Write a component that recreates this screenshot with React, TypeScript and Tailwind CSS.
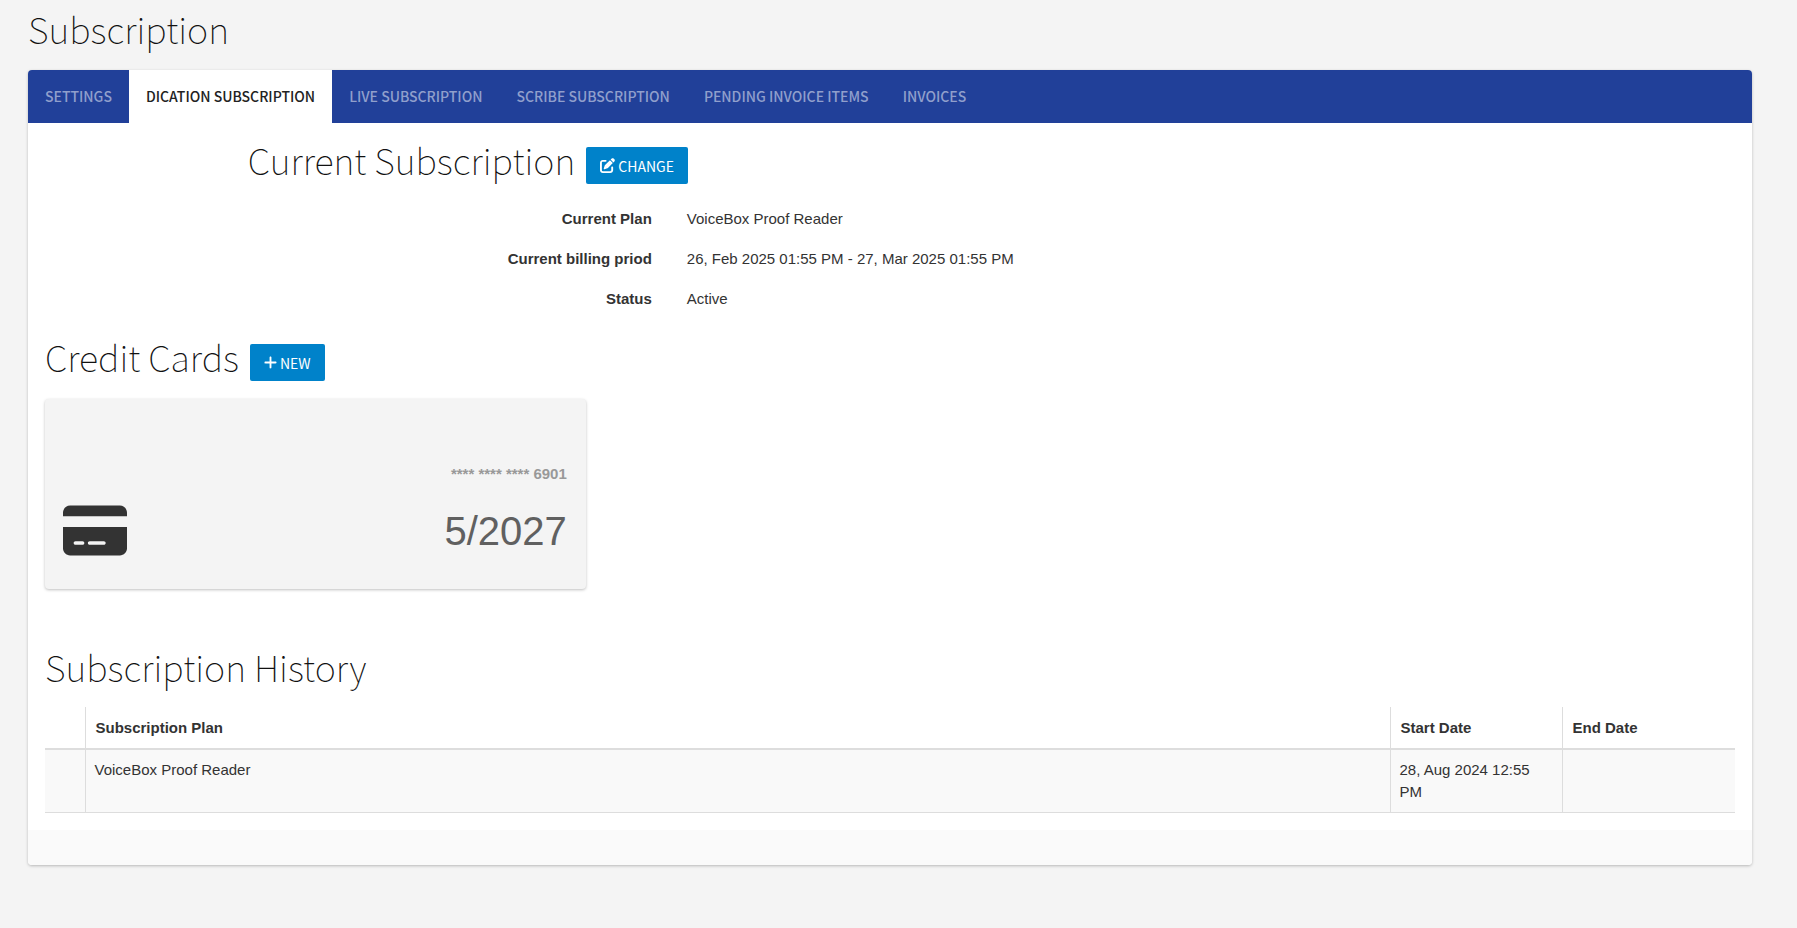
import React, { useState } from 'react';
import { FaCreditCard, FaPenToSquare, FaPlus } from 'react-icons/fa6';

const tabs = [
  'Settings',
  'Dication Subscription',
  'Live Subscription',
  'Scribe Subscription',
  'Pending Invoice Items',
  'Invoices',
];

const planDetails = [
  { label: 'Current Plan', value: 'VoiceBox Proof Reader' },
  { label: 'Current billing priod', value: '26, Feb 2025 01:55 PM - 27, Mar 2025 01:55 PM' },
  { label: 'Status', value: 'Active' },
];

const history = [
  { plan: 'VoiceBox Proof Reader', start: '28, Aug 2024 12:55 PM', end: '' },
];

const headingClass =
  "font-['Noto_Sans_CJK_SC',sans-serif] text-[36px] leading-[40px] font-thin text-[#111]";

interface ActionButtonProps {
  icon: React.ReactNode;
  children: React.ReactNode;
}

const ActionButton = ({ icon, children }: ActionButtonProps) => (
  <button
    type="button"
    className="mt-2 flex h-[37px] items-center gap-[3px] rounded-xs bg-[#0082ca] px-[14px] font-['Noto_Sans_CJK_SC',sans-serif] text-[14px] leading-[20px] font-normal text-white uppercase"
  >
    {icon}
    {children}
  </button>
);

const CreditCard = () => (
  <div className="flex h-[190px] w-[32%] items-end justify-between rounded-sm bg-[#f4f4f4] pr-[19px] pl-[18px] shadow-[0_1px_3px_rgba(0,0,0,0.25)]">
    <FaCreditCard className="mb-[30px] h-[57px] w-[64px]" />
    <div className="pb-8 text-right">
      <p className="text-[15px] leading-[22px] font-bold text-[#999]">**** **** **** 6901</p>
      <p className="mt-5 text-[40px] leading-[52px] text-[#606060]">5/2027</p>
    </div>
  </div>
);

const App = () => {
  const [activeTab, setActiveTab] = useState(tabs[1]);

  return (
    <div className="min-h-screen bg-[#f4f4f4] pr-[45px] pb-16 pl-7 font-['Liberation_Sans',Arial,sans-serif] text-[15px] leading-[22px] text-[#333]">
      <h1 className={`${headingClass} pt-2 pb-[22px]`}>Subscription</h1>

      <div className="overflow-hidden rounded-sm bg-white shadow-[0_1px_3px_rgba(0,0,0,0.25)]">
        {/* Tabs */}
        <nav className="flex bg-[#214099]">
          {tabs.map((tab) => (
            <button
              key={tab}
              type="button"
              onClick={() => setActiveTab(tab)}
              className={`h-[53px] px-[17px] pb-[2px] font-['Noto_Sans_CJK_SC',sans-serif] text-[14px] leading-[20px] font-medium uppercase ${
                tab === activeTab ? 'bg-white text-[#222]' : 'text-[#909fcc]'
              }`}
            >
              {tab}
            </button>
          ))}
        </nav>

        <div className="px-[17px] pb-[17px]">
          {/* Current subscription */}
          <section className="ml-[12%] pt-4">
            <div className="flex items-start gap-[11px]">
              <h2 className={headingClass}>Current Subscription</h2>
              <ActionButton icon={<FaPenToSquare className="size-[15px]" />}>Change</ActionButton>
            </div>
            <dl className="mt-6 space-y-[18px]">
              {planDetails.map((item) => (
                <div key={item.label} className="flex gap-[35px]">
                  <dt className="w-[404px] text-right font-bold">{item.label}</dt>
                  <dd>{item.value}</dd>
                </div>
              ))}
            </dl>
          </section>

          {/* Credit cards */}
          <section className="pt-[26px]">
            <div className="mb-[18px] flex items-start gap-[11px]">
              <h2 className={headingClass}>Credit Cards</h2>
              <ActionButton icon={<FaPlus className="h-[15px] w-[13px]" />}>New</ActionButton>
            </div>
            <CreditCard />
          </section>

          {/* History */}
          <section className="pt-[57px]">
            <h2 className={headingClass}>Subscription History</h2>
            <table className="mt-[21px] w-full table-fixed border-collapse text-left">
              <thead>
                <tr className="h-[42px] border-b-2 border-[#ddd]">
                  <th className="w-[40px]" />
                  <th className="border-l border-[#ddd] px-[10px]">Subscription Plan</th>
                  <th className="w-[172px] border-l border-[#ddd] px-[10px]">Start Date</th>
                  <th className="w-[173px] border-l border-[#ddd] px-[10px]">End Date</th>
                </tr>
              </thead>
              <tbody>
                {history.map((row) => (
                  <tr key={row.start} className="border-b border-[#ddd] bg-[#f9f9f9] align-top">
                    <td />
                    <td className="border-l border-[#ddd] px-[9px] py-[9px]">{row.plan}</td>
                    <td className="border-l border-[#ddd] px-[9px] py-[9px]">{row.start}</td>
                    <td className="border-l border-[#ddd] px-[9px] py-[9px]">{row.end}</td>
                  </tr>
                ))}
              </tbody>
            </table>
          </section>
        </div>

        <div className="h-[35px] bg-[#fafafa]" />
      </div>
    </div>
  );
};

export default App;
